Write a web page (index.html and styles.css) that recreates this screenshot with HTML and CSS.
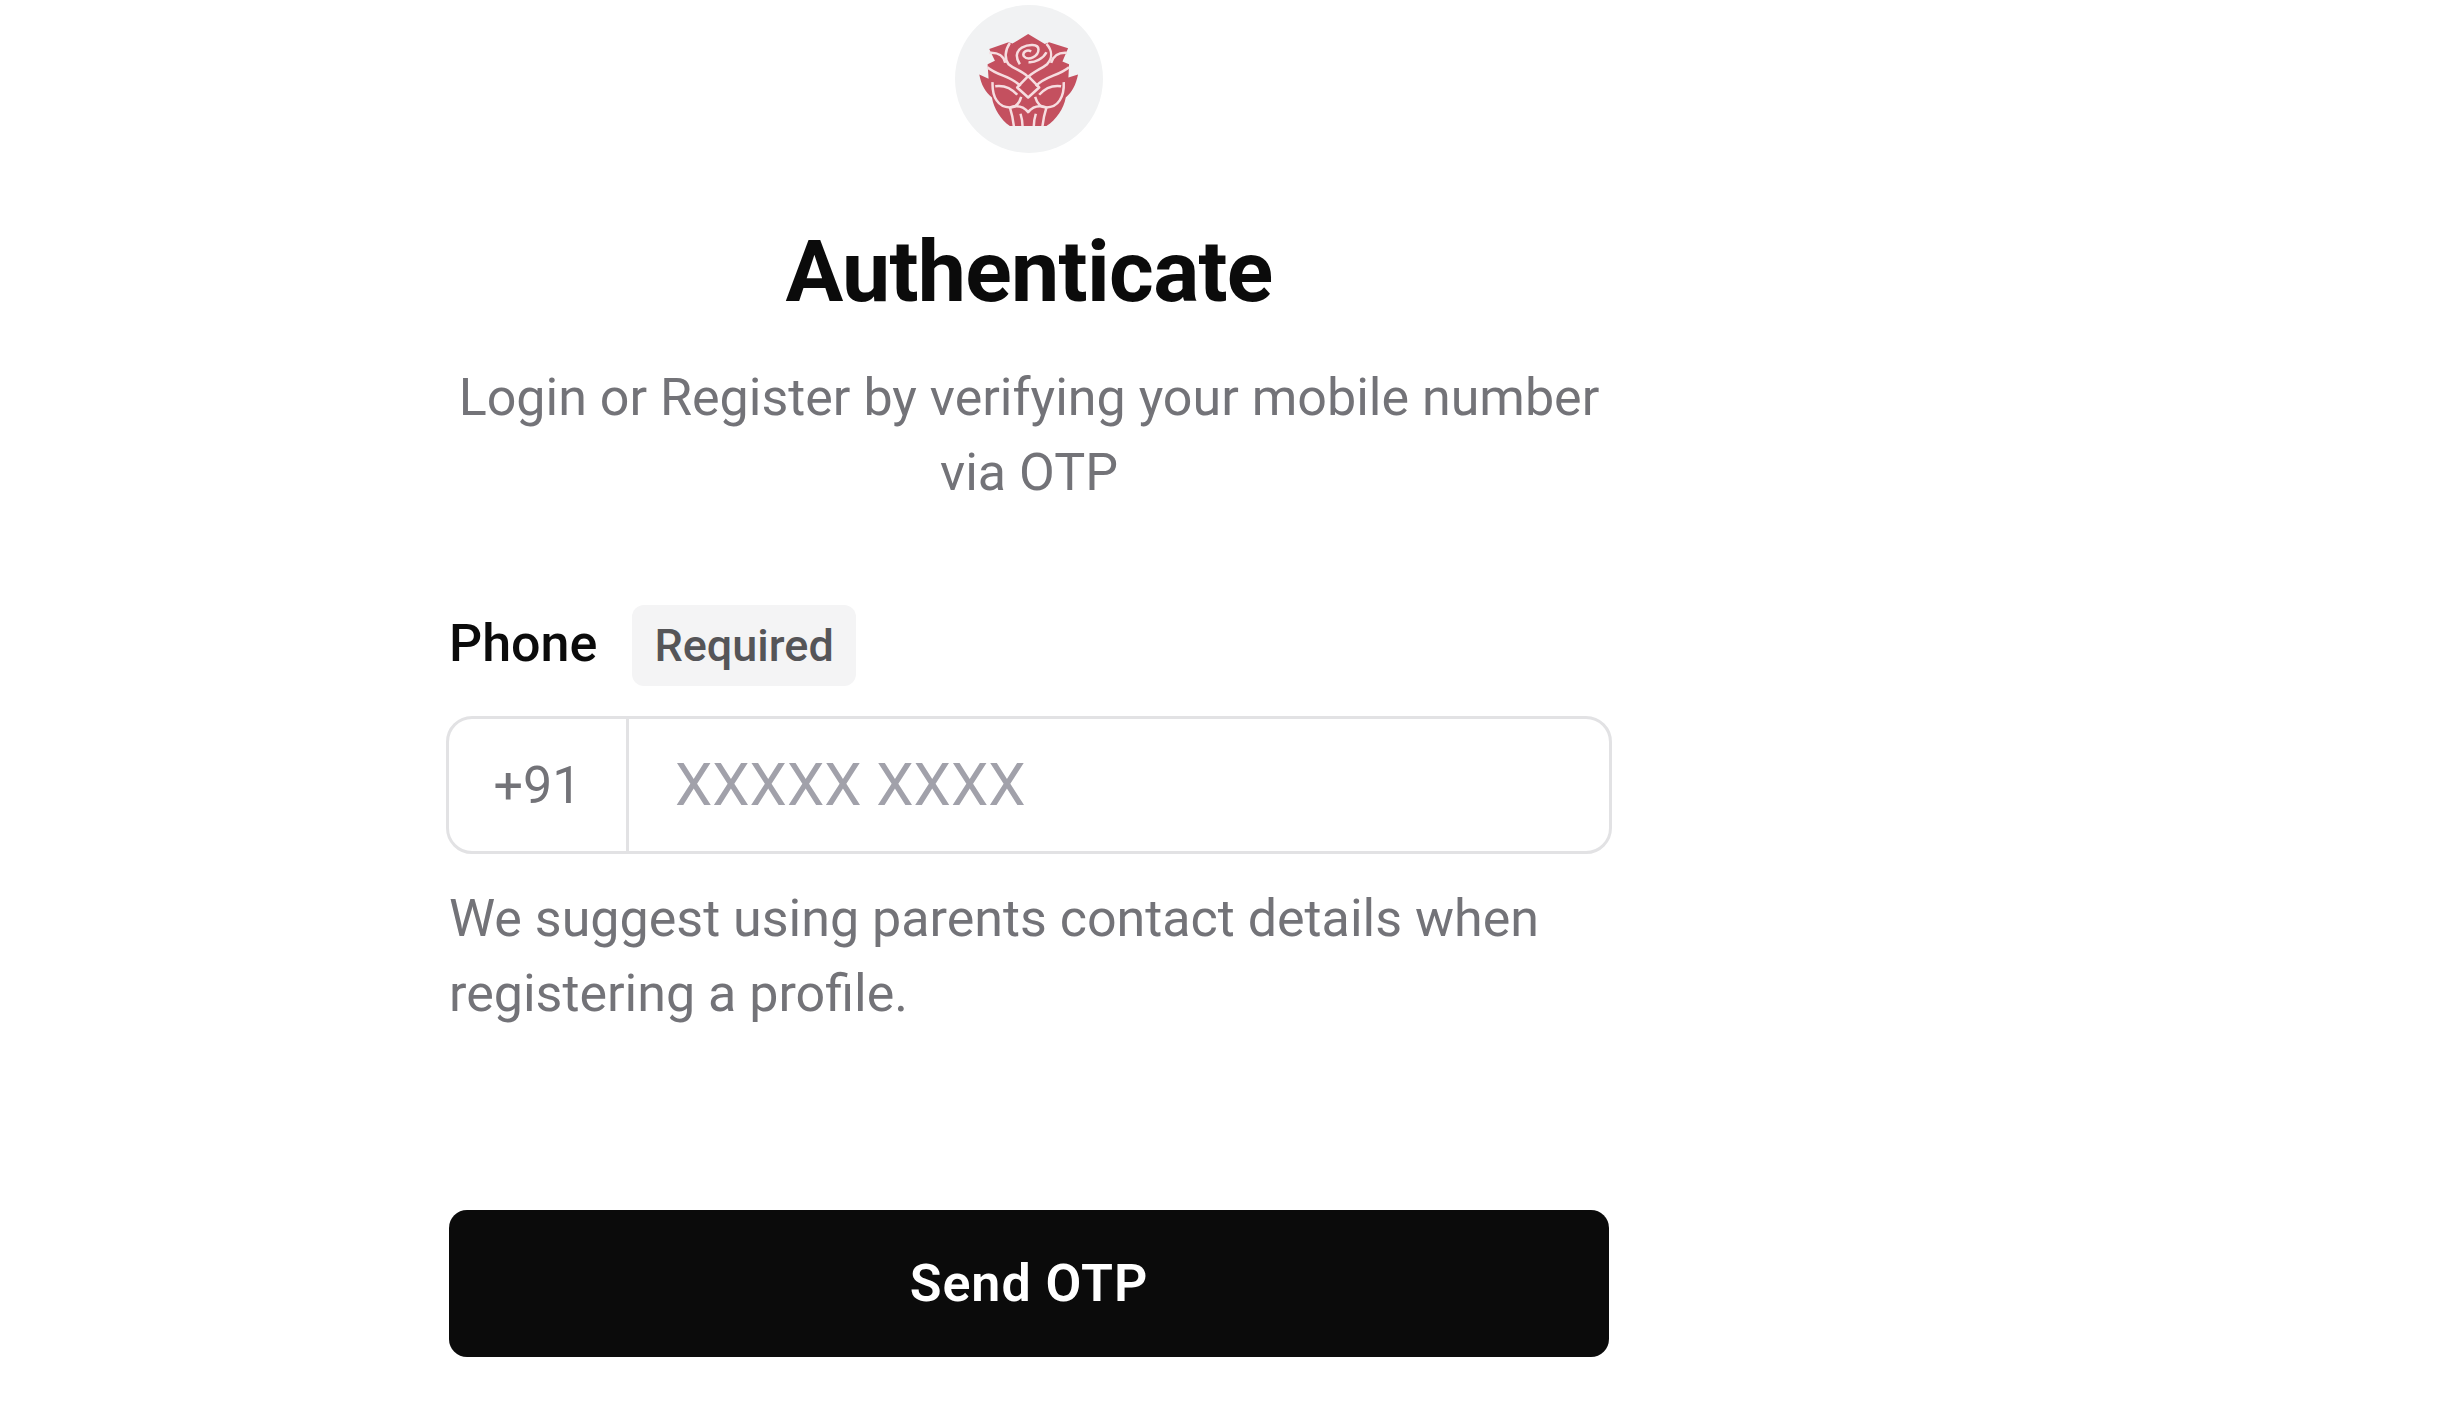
FILE: index.html
```html
<!DOCTYPE html>
<html lang="en">
<head>
    <meta charset="UTF-8">
    <meta name="viewport" content="width=device-width, initial-scale=1.0">
    <title>Authenticate</title>
    <link rel="stylesheet" href="styles.css">
</head>
<body>
    <main class="auth">
        <div class="logo">
            <svg class="rose" viewBox="75 18 445 445" aria-hidden="true">
                <path class="rose-fill" d="M295 105 L345 135 L358 130 L415 148 L398 188 L418 196 L416 236 L445 227 C438 258 428 280 408 296 C402 330 380 362 350 382 L240 382 C212 362 192 330 186 296 C166 280 154 258 148 227 L176 240 L173 196 L195 186 L178 150 L236 130 L248 134 Z"/>
                <g class="rose-line">
                    <path d="M178 162 C205 160 222 172 226 192"/>
                    <path d="M412 162 C385 160 370 172 364 192"/>
                    <path d="M240 132 C224 155 224 180 236 196 C255 212 275 215 292 232"/>
                    <path d="M350 135 C368 155 368 178 352 196 C335 210 315 216 298 232"/>
                    <path d="M270 196 C258 178 256 158 276 146 C295 136 326 134 326 152 C326 172 296 188 282 172 C276 160 292 150 304 158"/>
                    <path d="M296 190 C315 192 340 180 350 160"/>
                    <path d="M172 205 C205 232 245 232 272 262"/>
                    <path d="M418 205 C385 232 345 232 318 262"/>
                    <path d="M295 232 L328 266 L295 296 L262 266 Z"/>
                    <path d="M188 250 C186 295 205 326 240 326 C262 326 270 308 274 294"/>
                    <path d="M402 250 C404 295 385 326 350 326 C328 326 320 308 316 294"/>
                    <path d="M196 262 C225 258 248 272 262 288"/>
                    <path d="M394 262 C365 258 342 272 328 288"/>
                    <path d="M240 326 C246 345 250 364 252 382"/>
                    <path d="M350 326 C344 345 340 364 338 382"/>
                    <path d="M240 326 C262 318 282 324 295 340 C308 324 328 318 350 326"/>
                    <path d="M272 345 C276 358 278 370 278 382"/>
                    <path d="M318 345 C314 358 312 370 312 382"/>
                </g>
            </svg>
        </div>
        <h1 class="title">Authenticate</h1>
        <p class="subtitle">Login or Register by verifying your mobile number via OTP</p>

        <div class="field-label">
            <label for="phone">Phone</label>
            <span class="badge">Required</span>
        </div>
        <div class="phone-input">
            <span class="prefix">+91</span>
            <input id="phone" type="text" placeholder="XXXXX XXXX">
        </div>
        <p class="hint">We suggest using parents contact details when registering a profile.</p>

        <button class="send-btn">Send OTP</button>
    </main>
</body>
</html>
```

FILE: styles.css
```css
* {
    margin: 0;
    padding: 0;
    box-sizing: border-box;
}

html, body {
    width: 100%;
    height: 100%;
    background-color: #FFFFFF;
    font-family: "Roboto", sans-serif;
    overflow: hidden;
}

.auth {
    width: 1160px;
    margin-left: 449px;
    display: flex;
    flex-direction: column;
    padding-top: 5px;
}

.logo {
    width: 148px;
    height: 148px;
    border-radius: 50%;
    background-color: #F1F2F3;
    align-self: center;
}

.rose {
    display: block;
    width: 148px;
    height: 148px;
}

.rose-fill {
    fill: #C4505F;
}

.rose-line path {
    fill: none;
    stroke: #F6DDE0;
    stroke-width: 7.5;
    stroke-linejoin: round;
}

.title {
    margin-top: 69px;
    font-size: 86px;
    font-weight: 700;
    line-height: 100px;
    letter-spacing: -0.7px;
    color: #0B0B0B;
    text-align: center;
}

.subtitle {
    margin-top: 38px;
    font-size: 52px;
    line-height: 75px;
    color: #737378;
    text-align: center;
}

.field-label {
    margin-top: 95px;
    display: flex;
    align-items: center;
    gap: 35px;
}

.field-label label {
    font-size: 52px;
    font-weight: 500;
    color: #0B0B0B;
    margin-bottom: 4px;
}

.badge {
    height: 81px;
    padding: 0 22px;
    display: flex;
    align-items: center;
    border-radius: 12px;
    background-color: #F4F4F5;
    font-size: 45px;
    font-weight: 500;
    color: #555558;
}

.phone-input {
    margin: 30px -3px 0;
    height: 138px;
    display: flex;
    align-items: stretch;
    border: 3px solid #E2E2E4;
    border-radius: 26px;
}

.prefix {
    width: 180px;
    display: flex;
    align-items: center;
    justify-content: center;
    border-right: 3px solid #E2E2E4;
    font-size: 52px;
    color: #737378;
}

.phone-input input {
    flex: 1;
    min-width: 0;
    border: none;
    outline: none;
    background: transparent;
    padding-left: 46px;
    font-family: "Roboto", sans-serif;
    font-size: 59.5px;
    color: #0B0B0B;
}

.phone-input input::placeholder {
    color: #A1A1AA;
    opacity: 1;
}

.hint {
    margin-top: 27px;
    font-size: 52px;
    line-height: 75px;
    color: #737378;
}

.send-btn {
    margin-top: 179px;
    height: 147px;
    border: none;
    border-radius: 18px;
    background-color: #0B0B0B;
    color: #FFFFFF;
    font-family: "Roboto", sans-serif;
    font-size: 52px;
    font-weight: 600;
    letter-spacing: 1px;
}
```
